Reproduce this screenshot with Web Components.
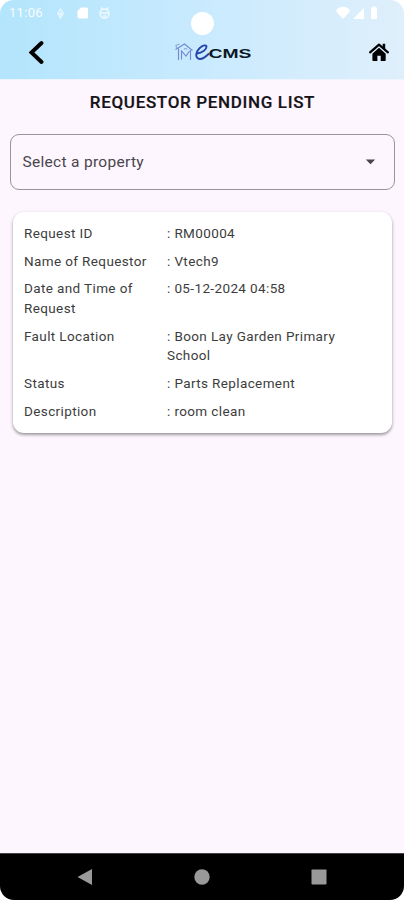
<!DOCTYPE html>
<html lang="en">
<head>
<meta charset="utf-8">
<title>Requestor Pending List</title>
<style>
html,body{margin:0;height:100%;background:#fff}
body{font-family:Roboto,"Noto Sans",sans-serif;overflow:hidden}
</style>
</head>
<body>
<phone-screen>
  <app-header slot="top"></app-header>
  <page-title>REQUESTOR PENDING LIST</page-title>
  <select-field>Select a property</select-field>
  <request-card>
    <detail-row label="Request ID">: RM00004</detail-row>
    <detail-row label="Name of Requestor">: Vtech9</detail-row>
    <detail-row label="Date and Time of Request">: 05-12-2024 04:58</detail-row>
    <detail-row label="Fault Location">: Boon Lay Garden Primary School</detail-row>
    <detail-row label="Status">: Parts Replacement</detail-row>
    <detail-row label="Description">: room clean</detail-row>
  </request-card>
  <nav-bar slot="bottom"></nav-bar>
</phone-screen>
<script>
function define(name, html, setup) {
  customElements.define(name, class extends HTMLElement {
    constructor() {
      super();
      this.attachShadow({mode: 'open'}).innerHTML = html;
    }
    connectedCallback() { if (setup) setup(this); }
  });
}

define('phone-screen', `
<style>
:host{display:flex;flex-direction:column;width:404px;height:900px;border-radius:14px;overflow:hidden;background:#fdf6fe}
main{flex:1;display:flex;flex-direction:column}
</style>
<slot name="top"></slot><main><slot></slot></main><slot name="bottom"></slot>`);

define('status-bar', `
<style>
:host{display:flex;align-items:center;height:25px;padding:0 25px 0 9px;color:#fff;font-size:13px;letter-spacing:.3px}
span{width:47px;opacity:.9}
svg{display:block}
.l{flex:1}
</style>
<span>11:06</span>
<svg class="l" width="60" height="16" viewBox="56 5 60 16" preserveAspectRatio="xMinYMid meet" fill="#fff">
  <path d="M60.500 9L63.300 13.500L60.500 18L57.700 13.500Z" fill="none" stroke="#fff" stroke-width="1.300" opacity=".7"/><circle cx="60.500" cy="14" r="1.400" opacity=".75"/>
  <path d="M81 7.500h5.500q1.500 0 1.500 1.500v8q0 1.500-1.500 1.500h-7.500q-1.500 0-1.500-1.500V11z"/>
  <g fill="none" stroke="#fff" stroke-width="1.500" opacity=".75"><circle cx="104.500" cy="13.500" r="4.500"/><path d="M101 7.500l1.500 2M108 7.500l-1.500 2M100.500 13h8M103 16h3"/></g>
</svg>
<svg width="44" height="14" viewBox="334 5 44 14" fill="#fff">
  <path d="M335.500 8.500Q342 2.500 348.500 8.500V11L342 18L335.500 11Z"/><path d="M363 7v11h-11z"/><path d="M370 6.500h1.500v-1h3v1h1.500V18h-6z"/>
</svg>`);

define('brand-logo', `
<style>:host{display:block}svg{display:block}</style>
<svg width="80" height="22" viewBox="174 40 80 22">
  <g fill="none" stroke="#7088d4" stroke-width="1.100">
    <path d="M178.500 59V47.500M175.500 48.500l9-5.500 8 6.500M190.500 49v10M181.500 58.500V50l4.500 5 3.500-5"/>
    <path d="M175.500 44.500l4-1.500M176.500 47l-.5-2.500M184 48.500q2-2 3 0" stroke="#8da3dc"/>
  </g>
  <path d="M197 52.500C202 52 206.500 48.500 206.500 45.800C206.500 43.700 203 43.800 200 46.800C196.500 50 195 54.500 197.500 57C200 59 204.500 57 208.500 53" fill="none" stroke="#2546ad" stroke-width="1.900" stroke-linecap="round"/>
  <text x="208.500" y="56.500" font-family="Liberation Sans" font-weight="700" font-size="12.800" textLength="43" lengthAdjust="spacingAndGlyphs" fill="#0a1724">CMS</text>
</svg>`);

define('app-header', `
<style>
:host{display:flex;flex-direction:column;position:relative;height:80px;background:linear-gradient(90deg,#b3e5fc,#c9eafe 50%,#dfeffb);border-bottom:1px solid #eef4fd;box-sizing:border-box}
.camera{position:absolute;left:191px;top:12px;width:23px;height:23px;border-radius:50%;background:#fff}
.bar{display:grid;grid-template-columns:1fr 80px 1fr;align-items:center;height:53px;padding:0 14px 0 26px}
.bar svg{display:block}
.bar brand-logo{margin-left:6px;margin-right:-6px}
.home{justify-self:end}
</style>
<status-bar></status-bar>
<i class="camera"></i>
<div class="bar">
  <svg width="18" height="26" viewBox="26 38 18 26"><path d="M41.500 42L31.500 51.500L41.500 61" fill="none" stroke="#000" stroke-width="3.900" stroke-linecap="round" stroke-linejoin="miter"/></svg>
  <brand-logo></brand-logo>
  <svg class="home" width="22" height="22" viewBox="-.500 -.500 23 23">
    <path d="M1.700 11.400L11 3.300l9.300 8.100" fill="none" stroke="#000" stroke-width="2.300" stroke-linecap="round" stroke-linejoin="round"/>
    <path d="M14.800 2.500h2.700v6l-2.700-2.500zM11 6.600l7 6.100v6.800q0 .8-.8.8h-4.400v-5.500H9.300v5.500H4.900q-.8 0-.8-.8v-6.800z"/>
  </svg>
</div>`);

define('page-title', `
<style>:host{display:block;text-align:center;font-size:17px;line-height:22px;font-weight:500;letter-spacing:.66px;color:#151318;padding-top:11px;padding-left:1px;-webkit-text-stroke:.2px #151318}</style><slot></slot>`);

define('select-field', `
<style>
:host{display:flex;align-items:center;justify-content:space-between;box-sizing:border-box;height:56px;margin:21px 9px 0 10px;padding:0 18px 0 11.500px;border:1px solid #99939c;border-radius:9px;font-size:15.500px;letter-spacing:.3px;color:#49454c}
svg{display:block}
</style>
<span><slot></slot></span><svg width="11" height="6" viewBox="0 0 11 6"><path d="M.8.5h9.400L5.500 5.200z" fill="#49454c"/></svg>`);

define('request-card', `
<style>:host{display:flex;flex-direction:column;gap:7.900px;box-sizing:border-box;height:220.500px;margin:22px 12px 0 13px;padding:12.300px 12px 0 11px;background:#fff;border-radius:11px;box-shadow:0 2px 3px rgba(0,0,0,.32),0 1px 4px rgba(0,0,0,.1)}</style><slot></slot>`);

define('detail-row', `
<style>
:host{display:grid;grid-template-columns:143px 1fr;font-size:13.500px;line-height:19.700px;letter-spacing:.38px;color:#3d3d3d}
.label{padding-right:12px}
.value{padding-right:24px}
</style>
<span class="label"></span><span class="value"><slot></slot></span>`,
  el => { el.shadowRoot.querySelector('.label').textContent = el.getAttribute('label'); });

define('nav-bar', `
<style>
:host{display:block;height:47px;box-sizing:border-box;background:#000;border-top:1px solid #454247}
div{display:flex;justify-content:space-between;align-items:center;height:46px;padding:0 77px}
svg{display:block}
</style>
<div>
<svg width="16" height="18" viewBox="0 0 16 18"><path d="M.5 9L15 1v16z" fill="#999"/></svg>
<svg width="16" height="16"><circle cx="8" cy="8" r="7.700" fill="#999"/></svg>
<svg width="16" height="16"><rect x=".5" y=".5" width="15" height="15" rx=".7" fill="#999"/></svg>
</div>`);
</script>
</body>
</html>
